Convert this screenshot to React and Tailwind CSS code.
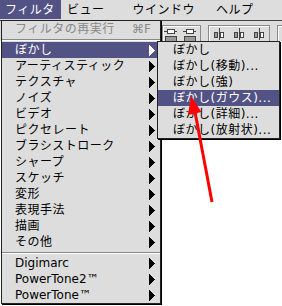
import React from 'react';

const font = "font-['DejaVu_Sans','Noto_Sans_CJK_JP',sans-serif]";

const mainItems = [
    'ぼかし',
    'アーティスティック',
    'テクスチャ',
    'ノイズ',
    'ビデオ',
    'ピクセレート',
    'ブラシストローク',
    'シャープ',
    'スケッチ',
    '変形',
    '表現手法',
    '描画',
    'その他',
];

const plugins = ['Digimarc', 'PowerTone2™', 'PowerTone™'];

const subItems = [
    'ぼかし',
    'ぼかし(移動)...',
    'ぼかし(強)',
    'ぼかし(ガウス)...',
    'ぼかし(詳細)...',
    'ぼかし(放射状)...',
];

function Tri({ white }) {
    return (
        <svg width="6" height="11" viewBox="0 0 6 11" className="ml-auto mr-[5px] shrink-0" shapeRendering="crispEdges">
            <polygon points="0,0 6,5.5 0,11" fill={white ? '#fff' : '#000'} />
        </svg>
    );
}

function Sep() {
    return (
        <div className="h-[5px] pt-[2px]">
            <div className="h-px bg-[#888]"></div>
            <div className="h-px bg-white"></div>
        </div>
    );
}

function Row({ label, active, latin }) {
    return (
        <div className={`h-[16px] flex items-center pl-[13px] ${active ? 'bg-[#525285] text-white' : 'text-black'}`}>
            <span className={`leading-[16px] ${latin ? '' : 'tracking-[0.5px]'}`}>{label}</span>
            <Tri white={active} />
        </div>
    );
}

function Toolbar() {
    const slider = (bx) => (
        <g key={bx} stroke="#444" strokeWidth="1" shapeRendering="crispEdges">
            <rect x={bx + 0.5} y="11.5" width="3" height="5" fill="#999" />
            <line x1={bx + 5.5} y1="7" x2={bx + 5.5} y2="19" />
            <rect x={bx + 6.5} y="11.5" width="3" height="5" fill="#fff" />
        </g>
    );
    const align = (bx) => (
        <g key={bx} stroke="#444" strokeWidth="1" shapeRendering="crispEdges">
            <line x1={bx} y1="10.5" x2={bx + 13} y2="10.5" />
            <rect x={bx + 3.5} y="8.5" width="7" height="4" fill="#fff" />
            <rect x={bx + 1.5} y="15.5" width="11" height="5" fill="#999" />
        </g>
    );
    return (
        <svg width="120" height="20" viewBox="0 0 120 20" shapeRendering="crispEdges">
            <g fill="none" strokeWidth="1">
                <path d="M0.5 20 V4.5 H38.5 V20" stroke="#8a8a8a" />
                <path d="M1.5 20 V5.5 H37.5" stroke="#fff" />
                <path d="M46.5 20 V4.5 H107.5 V20" stroke="#8a8a8a" />
                <path d="M47.5 20 V5.5 H106.5" stroke="#fff" />
                <path d="M115.5 20 V4.5 H120" stroke="#8a8a8a" />
                <path d="M116.5 20 V5.5 H120" stroke="#fff" />
            </g>
            {align(2)}
            {align(21)}
            {slider(52)}
            {slider(72)}
            {slider(92)}
        </svg>
    );
}

export default function App() {
    return (
        <div className={`relative w-[282px] h-[306px] bg-white overflow-hidden text-[12px] ${font}`}>
            {/* menu bar */}
            <div className="h-[21px] bg-[#dddddd] border-b border-[#444] flex items-start text-black">
                <div className="h-[19px] w-[61px] bg-[#525285] text-white pl-[5px] flex items-center tracking-[0.5px]">フィルタ</div>
                <div className="h-[19px] pl-[6px] flex items-center tracking-[0.5px]">ビュー</div>
                <div className="h-[19px] pl-[28px] flex items-center tracking-[0.5px]">ウインドウ</div>
                <div className="h-[19px] pl-[21px] flex items-center tracking-[0.5px]">ヘルプ</div>
            </div>

            {/* palette toolbar behind the menu */}
            <div className="h-[20px] bg-[#dddddd] pl-[162px] flex">
                <Toolbar />
            </div>

            {/* filter menu */}
            <div className="absolute left-[1px] top-[20px] w-[160px] bg-[#dddddd] border border-[#222] shadow-[1px_1px_0_#000]">
                <div className="h-[16px] flex items-center pl-[13px] text-[#888]">
                    <span className="leading-[16px] tracking-[0.5px]">フィルタの再実行</span>
                    <span className="ml-auto mr-[9px] leading-[16px]">⌘F</span>
                </div>
                <Sep />
                {mainItems.map((m, i) => (
                    <Row key={m} label={m} active={i === 0} />
                ))}
                <Sep />
                {plugins.map((p) => (
                    <Row key={p} label={p} latin />
                ))}
            </div>

            {/* blur submenu */}
            <div className="absolute left-[157px] top-[41px] w-[123px] bg-[#dddddd] border border-[#222] shadow-[1px_1px_0_#000]">
                {subItems.map((s, i) => (
                    <div key={s} className={`h-[16px] flex items-center pl-[15px] ${i === 3 ? 'bg-[#525285] text-white' : 'text-black'}`}>
                        <span className="leading-[16px] tracking-[0.5px]">{s}</span>
                    </div>
                ))}
            </div>

            {/* red annotation arrow */}
            <svg className="absolute left-0 top-0 pointer-events-none" width="282" height="306" viewBox="0 0 282 306">
                <line x1="212" y1="202" x2="195" y2="112" stroke="#ff0000" strokeWidth="3" />
                <polygon points="191,96 201.5,112 188,115" fill="#ff0000" />
            </svg>
        </div>
    );
}
